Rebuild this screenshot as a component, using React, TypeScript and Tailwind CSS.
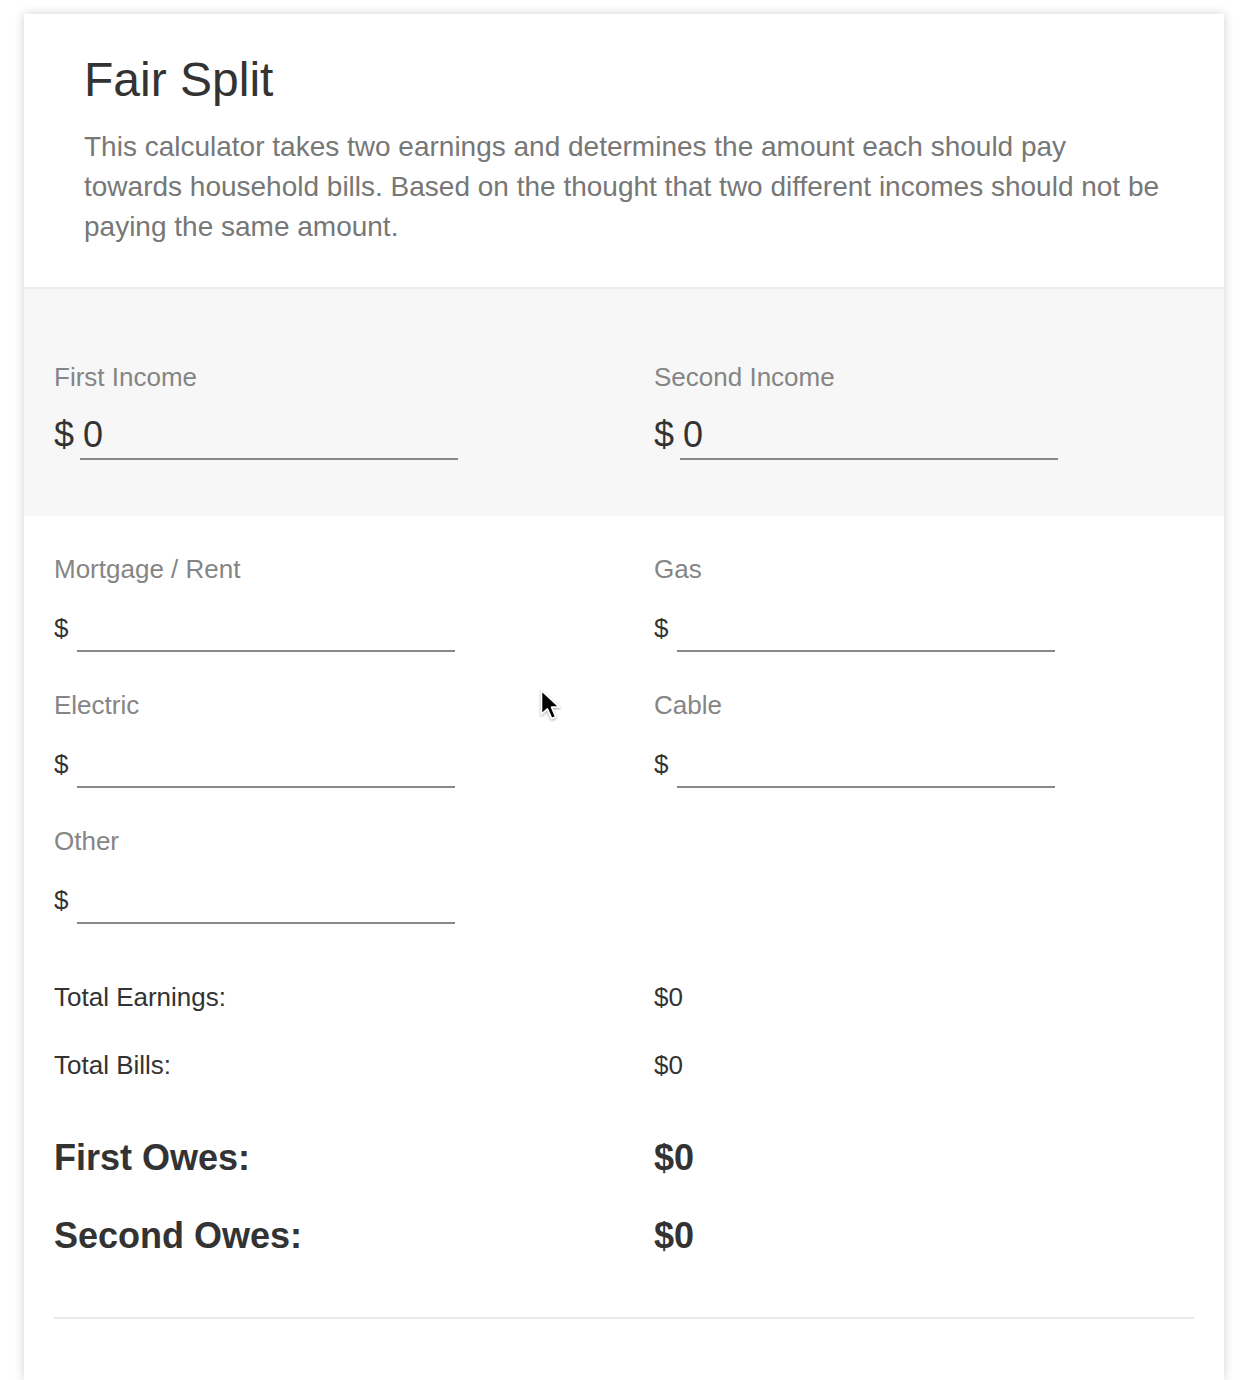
import { useState } from "react";

const bills = [
    { key: "mortgage", label: "Mortgage / Rent" },
    { key: "gas", label: "Gas" },
    { key: "electric", label: "Electric" },
    { key: "cable", label: "Cable" },
    { key: "other", label: "Other" },
];

function Cursor() {
    return (
        <svg
            className="absolute left-[515px] top-[674px] pointer-events-none drop-shadow-[0_1px_1px_rgba(0,0,0,0.35)]"
            width="24"
            height="36"
            viewBox="0 0 20 30"
        >
            <path
                d="M2 2 L2 22 L7 17.5 L10.5 25.5 L14 24 L10.5 16 L17 16 Z"
                fill="#000"
                stroke="#fff"
                strokeWidth="1.5"
                strokeLinejoin="round"
            />
        </svg>
    );
}

export default function App() {
    const [first, setFirst] = useState("0");
    const [second, setSecond] = useState("0");
    const [values, setValues] = useState<Record<string, string>>({});

    const num = (v?: string) => parseFloat(v || "0") || 0;
    const earnings = num(first) + num(second);
    const totalBills = bills.reduce((sum, b) => sum + num(values[b.key]), 0);
    const firstOwes = earnings ? (totalBills * num(first)) / earnings : 0;
    const secondOwes = earnings ? (totalBills * num(second)) / earnings : 0;
    const money = (n: number) => "$" + (Math.round(n * 100) / 100).toString();

    return (
        <div className="min-h-[1380px] bg-white font-['Liberation_Sans',Arial,sans-serif] pt-[14px]">
            <div className="relative ml-[24px] w-[1200px] min-h-[1366px] bg-white shadow-[0_0_10px_rgba(0,0,0,0.18)]">
                <header className="pl-[60px] pr-[40px] pt-[40px] pb-[40px]">
                    <h1 className="text-[48px] leading-[52px] text-[#333]">
                        Fair Split
                    </h1>
                    <p className="mt-[21px] text-[28px] leading-[40px] text-[#777] whitespace-nowrap">
                        This calculator takes two earnings and determines the
                        amount each should pay
                        <br />
                        towards household bills. Based on the thought that two
                        different incomes should not be
                        <br />
                        paying the same amount.
                    </p>
                </header>

                <section className="border-t-2 border-[#ebebeb] bg-[#f7f7f7] px-[30px] pt-[73px] pb-[56px] grid grid-cols-2 gap-x-[60px]">
                    {[
                        { label: "First Income", value: first, set: setFirst },
                        { label: "Second Income", value: second, set: setSecond },
                    ].map((f) => (
                        <div key={f.label}>
                            <label className="block text-[26px] leading-[30px] text-[#858585]">
                                {f.label}
                            </label>
                            <div className="mt-[23px] flex items-baseline text-[#333]">
                                <span className="text-[36px] leading-[40px]">$</span>
                                <input
                                    value={f.value}
                                    onChange={(e) => f.set(e.target.value)}
                                    className="ml-[6px] w-[378px] bg-transparent text-[36px] leading-[40px] pl-[3px] pb-[3px] border-b-2 border-[#888] outline-none text-[#333]"
                                />
                            </div>
                        </div>
                    ))}
                </section>

                <section className="px-[30px] pt-[38px] grid grid-cols-2 gap-x-[60px] gap-y-[38px]">
                    {bills.map((b) => (
                        <div key={b.key}>
                            <label className="block text-[26px] leading-[30px] text-[#858585]">
                                {b.label}
                            </label>
                            <div className="mt-[29px] flex items-baseline text-[#333]">
                                <span className="text-[26px] leading-[30px]">$</span>
                                <input
                                    value={values[b.key] ?? ""}
                                    onChange={(e) =>
                                        setValues({ ...values, [b.key]: e.target.value })
                                    }
                                    className="ml-[9px] w-[378px] bg-transparent text-[26px] leading-[30px] pl-[3px] pb-[7px] border-b-2 border-[#888] outline-none text-[#333]"
                                />
                            </div>
                        </div>
                    ))}
                </section>

                <section className="px-[30px] pt-[58px] text-[#333]">
                    <dl className="grid grid-cols-2 gap-x-[60px] text-[26px] leading-[30px]">
                        <dt>Total Earnings:</dt>
                        <dd>{money(earnings)}</dd>
                        <dt className="mt-[38px]">Total Bills:</dt>
                        <dd className="mt-[38px]">{money(totalBills)}</dd>
                    </dl>
                    <dl className="mt-[58px] grid grid-cols-2 gap-x-[60px] text-[36px] leading-[40px] font-bold">
                        <dt>First Owes:</dt>
                        <dd>{money(firstOwes)}</dd>
                        <dt className="mt-[38px]">Second Owes:</dt>
                        <dd className="mt-[38px]">{money(secondOwes)}</dd>
                    </dl>
                    <div className="mt-[61px] border-t-2 border-[#e8e8e8]" />
                </section>

                <Cursor />
            </div>
        </div>
    );
}
